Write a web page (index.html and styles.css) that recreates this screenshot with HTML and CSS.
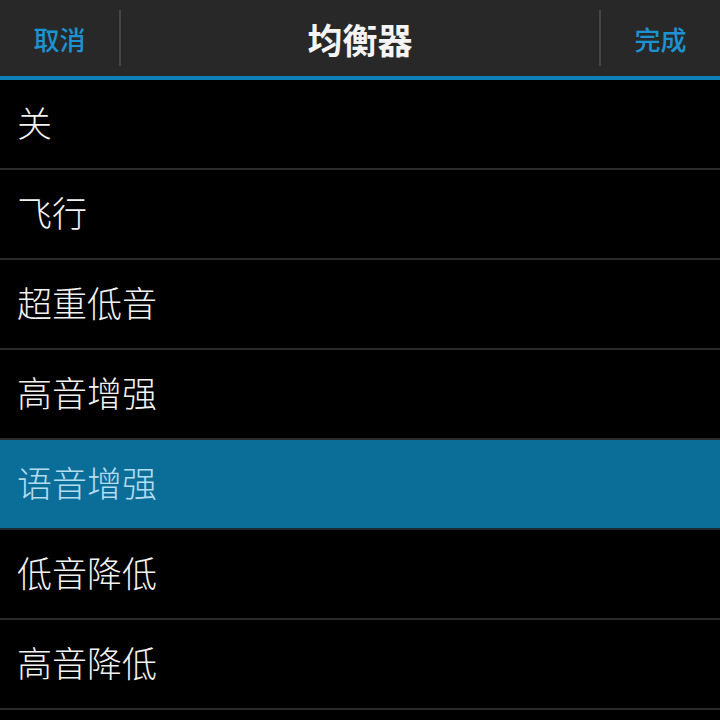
FILE: index.html
```html
<!DOCTYPE html>
<html lang="zh-CN">
<head>
    <meta charset="UTF-8">
    <title>均衡器</title>
    <link rel="stylesheet" href="styles.css">
</head>
<body>
    <div class="title-bar">
        <a class="bar-btn" href="#">取消</a>
        <span class="bar-sep"></span>
        <h1 class="bar-title">均衡器</h1>
        <span class="bar-sep"></span>
        <a class="bar-btn" href="#">完成</a>
    </div>

    <ul class="preset-list">
        <li>关</li>
        <li>飞行</li>
        <li>超重低音</li>
        <li>高音增强</li>
        <li class="selected">语音增强</li>
        <li>低音降低</li>
        <li>高音降低</li>
    </ul>
</body>
</html>
```

FILE: styles.css
```css
body {
    margin: 0;
    background-color: #000;
    font-family: "Noto Sans CJK SC", "Noto Sans", sans-serif;
    color: #f2f2f2;
}

.title-bar {
    display: flex;
    align-items: center;
    height: 76px;
    background-color: #282828;
    border-bottom: 4px solid #0f80b9;
}

.bar-btn {
    width: 119px;
    text-align: center;
    color: #1b93d2;
    font-size: 26px;
    font-weight: 500;
    text-decoration: none;
}

.bar-sep {
    width: 2px;
    height: 56px;
    background-color: #464646;
}

.bar-title {
    flex: 1;
    margin: 0;
    text-align: center;
    font-size: 35px;
    font-weight: bold;
    color: #f4f4f4;
}

.preset-list {
    list-style: none;
    margin: 0;
    padding: 0;
}

.preset-list li {
    height: 84px;
    line-height: 84px;
    padding: 0 0 4px 17px;
    font-size: 35px;
    font-weight: 300;
    border-bottom: 2px solid #2b2b2b;
}

.preset-list li.selected {
    background-color: #0b6e99;
    color: #b3dcef;
    border-bottom-color: #1c2a31;
}
```
